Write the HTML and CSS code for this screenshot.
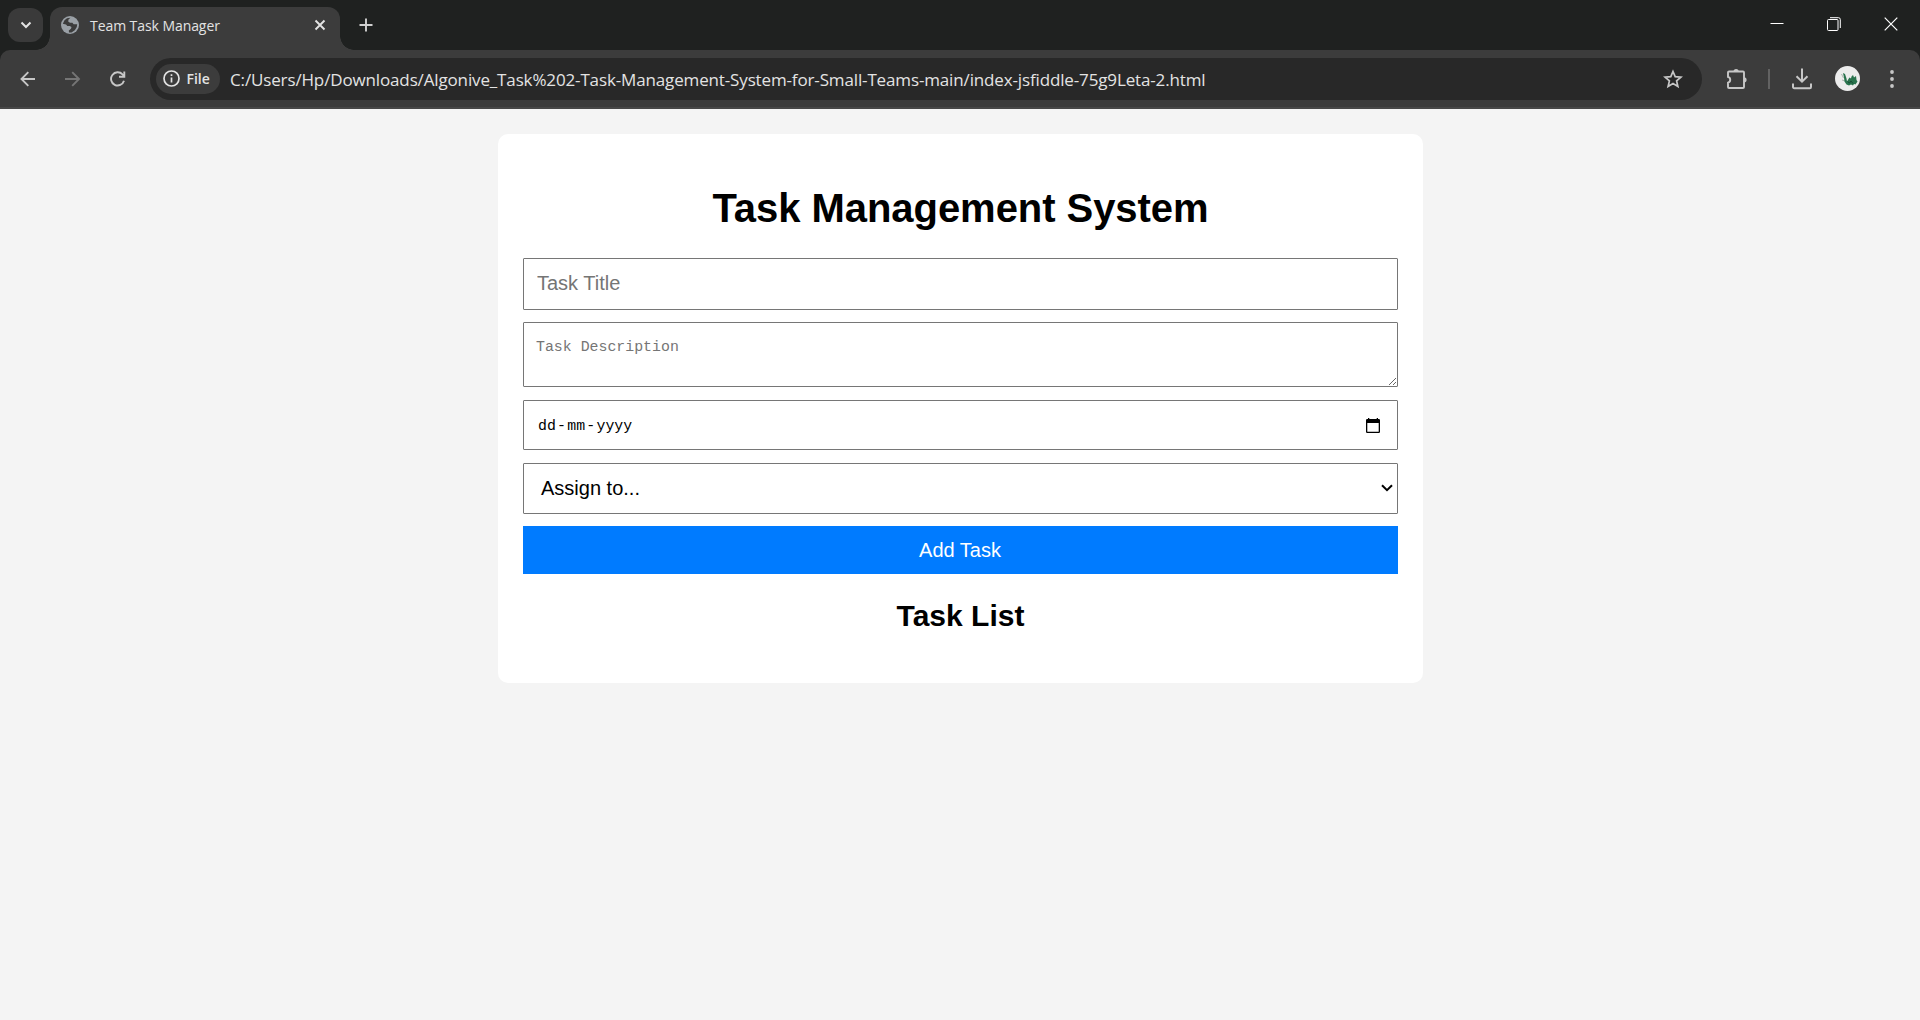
FILE: index.html
```html
<!DOCTYPE html>
<html lang="en">
<head>
<meta charset="utf-8">
<title>Team Task Manager</title>
<link rel="stylesheet" href="styles.css">
</head>
<body>
<header class="browser">
  <div class="tabstrip">
    <div class="tab-search">
      <svg width="20" height="20" viewBox="0 0 20 20" fill="none" stroke="#e3e3e3" stroke-width="2"><path d="M5.5 7.5 10 12l4.500-4.500"/></svg>
    </div>
    <div class="tab">
      <svg class="globe" width="18" height="18" viewBox="0 0 18 18"><circle cx="9" cy="9" r="9" fill="#9aa0a6"/><path d="M9.500 1.800 7.500 3.500l-.3 2L9 6.800h2.400l1.200 1.400h3.600l-.4 2.800-2 3.200-3.300 2.200-2.500.2-.2-2.200 2.200-1.600.5-1.800-1.700-.9H6.300L5 8.500 1.800 7.800 3.500 4.300 6 2.300z" fill="#3c3c3c"/></svg>
      <span class="tab-title">Team Task Manager</span>
      <svg class="tab-close" width="12" height="12" viewBox="0 0 12 12" stroke="#e3e3e3" stroke-width="1.900"><path d="m1.500 1.500 9 9m0-9-9 9"/></svg>
    </div>
    <svg class="new-tab" width="14" height="14" viewBox="0 0 14 14" stroke="#d0d0d0" stroke-width="1.900"><path d="M7 .5v13M.5 7h13"/></svg>
    <div class="window-buttons">
      <svg width="14" height="14" viewBox="0 0 14 14"><path d="M.5 6.500h13" stroke="#fff"/></svg>
      <svg width="14" height="14" viewBox="0 0 14 14" fill="none" stroke="#fff"><rect x=".5" y="2.500" width="10.500" height="11" rx="1"/><path d="M3 .7h8.500a1.800 1.800 0 0 1 1.800 1.800v8.500"/></svg>
      <svg width="14" height="14" viewBox="0 0 14 14" stroke="#fff" stroke-width="1.200"><path d="m.7.700 12.600 12.600m0-12.600L.7 13.300"/></svg>
    </div>
  </div>
  <div class="toolbar">
    <nav class="nav-buttons">
      <svg width="16" height="16" viewBox="0 0 16 16" fill="none" stroke="#c7c7c7" stroke-width="1.900"><path d="M15 8H1.800M8.300 1.200 1.500 8l6.800 6.800"/></svg>
      <svg width="16" height="16" viewBox="0 0 16 16" fill="none" stroke="#757575" stroke-width="1.900"><path d="M0 8h13.700M7.200 1.200 14 8l-6.800 6.800"/></svg>
      <svg width="16" height="16" viewBox="0 0 16 16" fill="none" stroke="#c7c7c7" stroke-width="1.900"><path d="M14 9.800A6.600 6.600 0 1 1 12.500 3.400l1.700 1.700M14.300.5v5.200H9"/></svg>
    </nav>
    <div class="address">
      <div class="scheme">
        <svg width="17" height="17" viewBox="0 0 17 17" fill="none" stroke="#e3e3e3" stroke-width="1.700"><circle cx="8.500" cy="8.500" r="7.500"/><path d="M8.500 7.500v5M8.500 4.300v1.800"/></svg>
        <span class="scheme-label">File</span>
      </div>
      <span class="url">C:/Users/Hp/Downloads/Algonive_Task%202-Task-Management-System-for-Small-Teams-main/index-jsfiddle-75g9Leta-2.html</span>
      <svg class="star" width="20" height="20" viewBox="0 0 20 20" fill="none" stroke="#c7c7c7" stroke-width="1.700"><path d="m10 2.500 2.200 5.200 5.700.5-4.300 3.700 1.300 5.600-4.900-3-4.900 3 1.300-5.600-4.300-3.700 5.700-.5z"/></svg>
    </div>
    <svg class="extensions" width="22" height="22" viewBox="0 0 22 22" fill="none" stroke="#c7c7c7" stroke-width="1.900"><path d="M3.500 3.500H17a1 1 0 0 1 1 1V19a1 1 0 0 1-1 1H3a1 1 0 0 1-1-1v-4.300a3 3 0 0 0 0-5.800V4.500a1 1 0 0 1 1-1z"/><path d="M7.500 3.500a2.600 2.600 0 0 1 5.200 0zM18 9.200a2.600 2.600 0 0 1 0 5.200z" fill="#c7c7c7" stroke="none"/></svg>
    <span class="divider"></span>
    <svg class="download" width="22" height="22" viewBox="0 0 22 22" fill="none" stroke="#c7c7c7" stroke-width="2"><path d="M11 .5v13M5.500 8.200 11 13.700l5.500-5.500M2 15.500V19a1.200 1.200 0 0 0 1.200 1.200h15.600A1.200 1.200 0 0 0 20 19v-3.500"/></svg>
    <svg class="avatar" width="25" height="25" viewBox="0 0 25 25"><circle cx="12.500" cy="12.500" r="12.500" fill="#ececec"/><path d="m6.500 8 2 4M10 15l-3-1" stroke="#a9b5ae" fill="none"/><path d="m8 7 2 1 1.500 4.500.5 3 1.500-2.500 1-1.500 1.500 1 .5-2 1.500-1.500 1 2.500 2-1.500.5 4 1 1.500-2 3-1.500-.5-1 1.500-2-1-2 1-2.500-1-2-3-.5-4z" fill="#29734d"/><path d="m12.500 15.500 2 1.500 1.500-2 2 2.500" stroke="#174c34" fill="none"/></svg>
    <svg class="menu-dots" width="4" height="18" viewBox="0 0 4 18" fill="#c7c7c7"><circle cx="2" cy="2" r="1.900"/><circle cx="2" cy="9" r="1.900"/><circle cx="2" cy="16" r="1.900"/></svg>
  </div>
</header>
<main class="container">
  <h1>Task Management System</h1>
  <form class="task-form">
    <input class="field title-field" type="text" placeholder="Task Title">
    <textarea class="field description-field" placeholder="Task Description"></textarea>
    <div class="field date-field">
      <span class="date-part">dd</span><span class="dash">-</span><span class="date-part">mm</span><span class="dash">-</span><span class="date-part">yyyy</span>
      <svg class="calendar" width="14" height="15" viewBox="0 0 14 15"><path d="M0 2.200Q0 1 1.200 1H2V0h1.300v1h7.400V0H12v1h.8Q14 1 14 2.200v11.600q0 1.200-1.200 1.200H1.200Q0 15 0 13.800zM1.300 5v8.700h11.400V5z" fill-rule="evenodd"/></svg>
    </div>
    <div class="field select-field">
      <span>Assign to...</span>
      <svg width="12" height="8" viewBox="0 0 12 8" fill="none" stroke="#000" stroke-width="2"><path d="m1 1.200 5 5 5-5"/></svg>
    </div>
    <button class="add-button" type="button">Add Task</button>
  </form>
  <h2>Task List</h2>
</main>
</body>
</html>
```
FILE: styles.css
```css
* { box-sizing: border-box; }
body {
  margin: 0;
  min-height: 1020px;
  background: #f4f4f4;
  font-family: "Liberation Sans", Arial, sans-serif;
  overflow: hidden;
}
svg { display: block; flex: none; }

.browser { font-family: "Open Sans", "Noto Sans", sans-serif; color: #e3e3e3; background: #1f2120; }
.tabstrip { display: flex; height: 50px; padding-left: 8px; }
.tab-search {
  display: flex; align-items: center; justify-content: center;
  width: 35px; height: 34px; margin-top: 8px;
  border-radius: 12px; background: #3a3a3a;
}
.tab-search svg { margin-left: 1px; }
.tab {
  position: relative;
  display: flex; align-items: center;
  width: 290px; height: 43px; margin: 7px 0 0 7px;
  padding: 0 14px 7px 11px;
  border-radius: 12px 12px 0 0; background: #3c3c3c;
}
.tab::before, .tab::after {
  content: ""; position: absolute; bottom: 0; width: 14px; height: 14px;
}
.tab::before { left: -14px; background: radial-gradient(circle at 0 0, transparent 13.500px, #3c3c3c 14px); }
.tab::after { right: -14px; background: radial-gradient(circle at 100% 0, transparent 13.500px, #3c3c3c 14px); }
.tab-title { margin-left: 11px; font-size: 14px; letter-spacing: -.07px; white-space: nowrap; }
.tab-close { margin-left: auto; }
.new-tab { margin: 18px 0 0 19px; }
.window-buttons { display: flex; gap: 43px; margin: 17px 22px 0 auto; }

.toolbar {
  display: flex; align-items: center;
  height: 59px; padding-left: 20px;
  background: #3c3c3c; border-bottom: 2px solid #484848;
  border-radius: 10px 10px 0 0;
}
.nav-buttons { display: flex; gap: 29px; width: 130px; }
.address {
  display: flex; align-items: center;
  width: 1552px; height: 42px; padding: 0 19px 0 6px;
  border-radius: 21px; background: #282828;
}
.scheme {
  display: flex; align-items: center;
  width: 64px; height: 30px; padding-left: 6.500px;
  border-radius: 15px; background: #3c3c3c;
}
.scheme-label { margin-left: 7px; font-size: 14px; font-weight: 600; }
.url { margin-left: 10px; padding-top: 2px; font-size: 17px; letter-spacing: -.14px; white-space: nowrap; }
.star { margin-left: auto; }
.extensions { margin-left: 24px; }
.divider { width: 2px; height: 20px; margin-left: 20px; background: #626262; }
.download { margin-left: 21px; }
.avatar { margin-left: 22px; }
.menu-dots { margin-left: 30px; }

.container {
  width: 925px; height: 549px; margin: 25px auto 0 498px; padding: 25px;
  border-radius: 10px; background: #fff;
  text-align: center;
}
h1 { margin: 26px 0 27px; font-size: 40px; line-height: 46px; letter-spacing: -.05px; }
h2 { margin: 24px 0 0; font-size: 30px; line-height: 35px; }
.task-form { display: flex; flex-direction: column; }
.field {
  width: 100%; margin: 0; border: 1px solid #767676; border-radius: 1px;
  background: #fff; color: #000; text-align: left;
}
.title-field { height: 52px; padding: 0 13px 2px; font: 20px "Liberation Sans", Arial, sans-serif; }
.description-field {
  height: 65px; margin-top: 12px; padding: 15px 12px 12px;
  font: 14.880px/19px "Liberation Mono", monospace; resize: vertical;
}
.field::placeholder { color: #757575; }
.date-field {
  display: flex; align-items: center;
  height: 50px; margin-top: 13px; padding: 0 17px 0 14px;
  font: 14.880px "Liberation Mono", monospace;
}
.date-part, .dash { padding-top: 2px; }
.dash { width: 11.400px; text-align: center; }
.calendar { margin-left: auto; }
.select-field {
  display: flex; align-items: center; justify-content: space-between;
  height: 51px; margin-top: 13px; padding: 0 4px 1px 17px;
  font-size: 20px;
}
.add-button {
  height: 48px; margin-top: 12px; padding: 1px 1px 0 0; border: 0;
  background: #007bff; color: #fff; font: 20px "Liberation Sans", Arial, sans-serif;
}
```
